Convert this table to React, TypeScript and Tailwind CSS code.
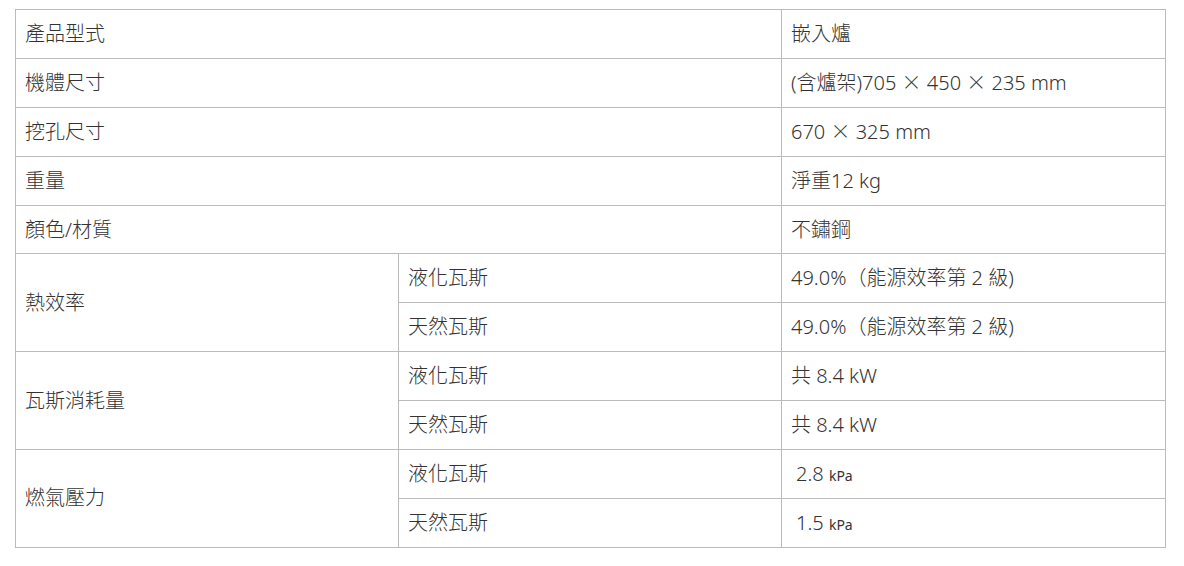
const X = () => <span className="font-['Noto_Sans_CJK_TC',sans-serif]">×</span>;

const rows: { label: string; value: React.ReactNode }[] = [
  { label: "產品型式", value: "嵌入爐" },
  {
    label: "機體尺寸",
    value: (
      <>
        (含爐架)705 <X /> 450 <X /> 235 mm
      </>
    ),
  },
  {
    label: "挖孔尺寸",
    value: (
      <>
        670 <X /> 325 mm
      </>
    ),
  },
  { label: "重量", value: "淨重12 kg" },
  { label: "顏色/材質", value: "不鏽鋼" },
];

const groups: { label: string; items: [string, React.ReactNode][] }[] = [
  {
    label: "熱效率",
    items: [
      ["液化瓦斯", "49.0%（能源效率第 2 級)"],
      ["天然瓦斯", "49.0%（能源效率第 2 級)"],
    ],
  },
  {
    label: "瓦斯消耗量",
    items: [
      ["液化瓦斯", "共 8.4 kW"],
      ["天然瓦斯", "共 8.4 kW"],
    ],
  },
  {
    label: "燃氣壓力",
    items: [
      [
        "液化瓦斯",
        <span className="pl-[5px]">
          2.8 <span className="text-[14px] font-normal">kPa</span>
        </span>,
      ],
      [
        "天然瓦斯",
        <span className="pl-[5px]">
          1.5 <span className="text-[14px] font-normal">kPa</span>
        </span>,
      ],
    ],
  },
];

const cell = "border border-[#bbbbbb] h-[48.9px] pl-[9px] pr-[10px] py-0 align-middle";

export default function App() {
  return (
    <div className="bg-white min-h-[566px] pt-[9px] pl-[15px] font-['Noto_Sans','Noto_Sans_CJK_TC',sans-serif] text-[20px] font-light text-[#333333]">
      <table className="w-[1150px] border-collapse table-fixed">
        <colgroup>
          <col className="w-[383px]" />
          <col className="w-[383px]" />
          <col className="w-[384px]" />
        </colgroup>
        <tbody>
          {rows.map((r) => (
            <tr key={r.label}>
              <td className={cell} colSpan={2}>
                {r.label}
              </td>
              <td className={cell}>{r.value}</td>
            </tr>
          ))}
          {groups.map((g) =>
            g.items.map(([k, v], i) => (
              <tr key={g.label + k}>
                {i === 0 && (
                  <td className={cell} rowSpan={2}>
                    {g.label}
                  </td>
                )}
                <td className={cell}>{k}</td>
                <td className={cell}>{v}</td>
              </tr>
            ))
          )}
        </tbody>
      </table>
    </div>
  );
}
